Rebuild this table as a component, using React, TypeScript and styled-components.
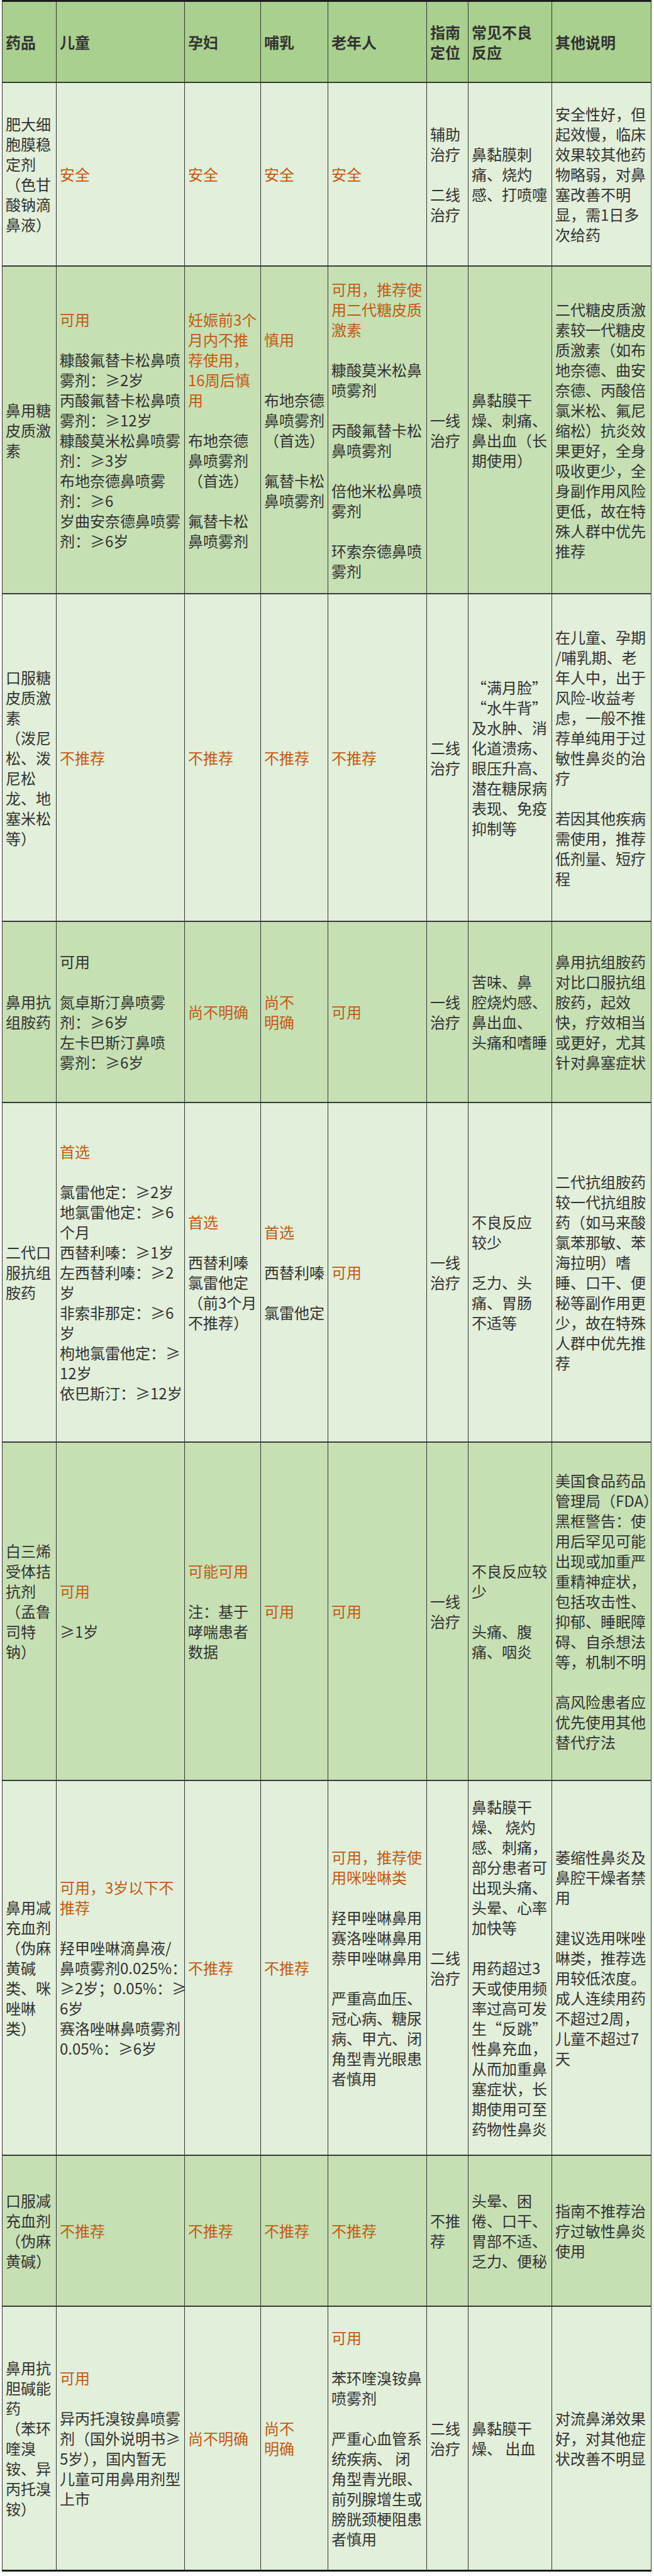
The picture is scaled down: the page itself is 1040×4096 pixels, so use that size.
import React from "react";
import styled, { createGlobalStyle } from "styled-components";

const GlobalStyle = createGlobalStyle`
  html, body { margin: 0; padding: 0; background: #ffffff; }
  body { font-family: "Noto Sans CJK SC", "Noto Sans", sans-serif; }
`;

const COLS = "86px 204px 121px 107px 157px 66px 133px 158px";

type Tone = "head" | "light" | "mid";

const BG: Record<Tone, string> = {
  head: "#a9d08e",
  light: "#e2efda",
  mid: "#c6e0b4",
};

const Page = styled.div`
  box-sizing: border-box;
  width: 1040px;
  padding: 0 0 0 3px;
`;

const Table = styled.div`
  display: flex;
  flex-direction: column;
  width: max-content;
  border-top: 3px solid #1c1c1c;
  border-bottom: 3px solid #1c1c1c;
  border-left: 1px solid #333333;
`;

const Row = styled.div<{ $h: number; $tone: Tone; $last?: boolean }>`
  display: grid;
  grid-template-columns: ${COLS};
  box-sizing: border-box;
  height: ${(p) => p.$h}px;
  background: ${(p) => BG[p.$tone]};
  border-bottom: ${(p) => (p.$last ? "none" : "2px solid #3a3a3a")};
`;

const Cell = styled.div`
  display: flex;
  flex-direction: column;
  justify-content: center;
  box-sizing: border-box;
  min-width: 0;
  padding-left: 5px;
  border-right: 1px solid #333333;
`;

const Line = styled.div<{ $accent?: boolean; $head?: boolean }>`
  height: 32px;
  line-height: 32px;
  font-size: 24px;
  white-space: nowrap;
  color: ${(p) => (p.$accent ? "#c55a11" : "#333333")};
  font-weight: ${(p) => (p.$head ? 700 : 400)};
`;

interface RowData {
  h: number;
  tone: Tone;
  cells: string[];
}

const header: RowData = {
  h: 129,
  tone: "head",
  cells: ["药品", "儿童", "孕妇", "哺乳", "老年人", "指南|定位", "常见不良|反应", "其他说明"],
};

const rows: RowData[] = [
  {
    h: 292,
    tone: "light",
    cells: [
      "肥大细|胞膜稳|定剂|（色甘|酸钠滴|鼻液）",
      "^安全",
      "^安全",
      "^安全",
      "^安全",
      "辅助|治疗||二线|治疗",
      "鼻黏膜刺|痛、烧灼|感、打喷嚏",
      "安全性好，但|起效慢，临床|效果较其他药|物略弱，对鼻|塞改善不明|显，需1日多|次给药",
    ],
  },
  {
    h: 521,
    tone: "mid",
    cells: [
      "鼻用糖|皮质激|素",
      "^可用||糠酸氟替卡松鼻喷|雾剂：≥2岁|丙酸氟替卡松鼻喷|雾剂：≥12岁|糠酸莫米松鼻喷雾|剂：≥3岁|布地奈德鼻喷雾|剂：≥6|岁曲安奈德鼻喷雾|剂：≥6岁",
      "^妊娠前3个|^月内不推|^荐使用，|^16周后慎|^用||布地奈德|鼻喷雾剂|（首选）||氟替卡松|鼻喷雾剂",
      "^慎用|||布地奈德|鼻喷雾剂|（首选）||氟替卡松|鼻喷雾剂|",
      "^可用，推荐使|^用二代糖皮质|^激素||糠酸莫米松鼻|喷雾剂||丙酸氟替卡松|鼻喷雾剂||倍他米松鼻喷|雾剂||环索奈德鼻喷|雾剂",
      "一线|治疗",
      "鼻黏膜干|燥、刺痛、|鼻出血（长|期使用）",
      "二代糖皮质激|素较一代糖皮|质激素（如布|地奈德、曲安|奈德、丙酸倍|氯米松、氟尼|缩松）抗炎效|果更好，全身|吸收更少，全|身副作用风险|更低，故在特|殊人群中优先|推荐",
    ],
  },
  {
    h: 521,
    tone: "light",
    cells: [
      "口服糖|皮质激|素|（泼尼|松、泼|尼松|龙、地|塞米松|等）",
      "^不推荐",
      "^不推荐",
      "^不推荐",
      "^不推荐",
      "二线|治疗",
      "“满月脸”|“水牛背”|及水肿、消|化道溃疡、|眼压升高、|潜在糖尿病|表现、免疫|抑制等",
      "在儿童、孕期|/哺乳期、老|年人中，出于|风险-收益考|虑，一般不推|荐单纯用于过|敏性鼻炎的治|疗||若因其他疾病|需使用，推荐|低剂量、短疗|程",
    ],
  },
  {
    h: 288,
    tone: "mid",
    cells: [
      "鼻用抗|组胺药",
      "可用||氮卓斯汀鼻喷雾|剂：≥6岁|左卡巴斯汀鼻喷|雾剂：≥6岁",
      "^尚不明确",
      "^尚不|^明确",
      "^可用",
      "一线|治疗",
      "苦味、鼻|腔烧灼感、|鼻出血、|头痛和嗜睡",
      "鼻用抗组胺药|对比口服抗组|胺药，起效|快，疗效相当|或更好，尤其|针对鼻塞症状",
    ],
  },
  {
    h: 540,
    tone: "light",
    cells: [
      "二代口|服抗组|胺药",
      "^首选||氯雷他定：≥2岁|地氯雷他定：≥6|个月|西替利嗪：≥1岁|左西替利嗪：≥2|岁|非索非那定：≥6|岁|枸地氯雷他定：≥|12岁|依巴斯汀：≥12岁",
      "^首选||西替利嗪|氯雷他定|（前3个月|不推荐）",
      "^首选||西替利嗪||氯雷他定",
      "^可用",
      "一线|治疗",
      "不良反应|较少||乏力、头|痛、胃肠|不适等",
      "二代抗组胺药|较一代抗组胺|药（如马来酸|氯苯那敏、苯|海拉明）嗜|睡、口干、便|秘等副作用更|少，故在特殊|人群中优先推|荐",
    ],
  },
  {
    h: 538,
    tone: "mid",
    cells: [
      "白三烯|受体拮|抗剂|（孟鲁|司特|钠）|",
      "^可用||≥1岁",
      "^可能可用||注：基于|哮喘患者|数据",
      "^可用",
      "^可用",
      "一线|治疗",
      "不良反应较|少||头痛、腹|痛、咽炎",
      "美国食品药品|管理局（FDA）|黑框警告：使|用后罕见可能|出现或加重严|重精神症状，|包括攻击性、|抑郁、睡眠障|碍、自杀想法|等，机制不明||高风险患者应|优先使用其他|替代疗法",
    ],
  },
  {
    h: 596,
    tone: "light",
    cells: [
      "鼻用减|充血剂|（伪麻|黄碱|类、咪|唑啉|类）",
      "^可用，3岁以下不|^推荐||羟甲唑啉滴鼻液/|鼻喷雾剂0.025%：|≥2岁；0.05%：≥|6岁|赛洛唑啉鼻喷雾剂|0.05%：≥6岁",
      "^不推荐",
      "^不推荐",
      "^可用，推荐使|^用咪唑啉类||羟甲唑啉鼻用|赛洛唑啉鼻用|萘甲唑啉鼻用||严重高血压、|冠心病、糖尿|病、甲亢、闭|角型青光眼患|者慎用",
      "二线|治疗",
      "鼻黏膜干|燥、 烧灼|感、刺痛，|部分患者可|出现头痛、|头晕、心率|加快等||用药超过3|天或使用频|率过高可发|生“反跳”|性鼻充血，|从而加重鼻|塞症状，长|期使用可至|药物性鼻炎",
      "萎缩性鼻炎及|鼻腔干燥者禁|用||建议选用咪唑|啉类，推荐选|用较低浓度。|成人连续用药|不超过2周，|儿童不超过7|天|",
    ],
  },
  {
    h: 240,
    tone: "mid",
    cells: [
      "口服减|充血剂|（伪麻|黄碱）",
      "^不推荐",
      "^不推荐",
      "^不推荐",
      "^不推荐",
      "不推|荐",
      "头晕、困|倦、口干、|胃部不适、|乏力、便秘",
      "指南不推荐治|疗过敏性鼻炎|使用",
    ],
  },
  {
    h: 418,
    tone: "light",
    cells: [
      "鼻用抗|胆碱能|药|（苯环|喹溴|铵、异|丙托溴|铵）",
      "^可用||异丙托溴铵鼻喷雾|剂（国外说明书≥|5岁），国内暂无|儿童可用鼻用剂型|上市",
      "^尚不明确",
      "^尚不|^明确",
      "^可用||苯环喹溴铵鼻|喷雾剂||严重心血管系|统疾病、 闭|角型青光眼、|前列腺增生或|膀胱颈梗阻患|者慎用",
      "二线|治疗",
      "鼻黏膜干|燥、 出血",
      "对流鼻涕效果|好，对其他症|状改善不明显",
    ],
  },
];

function CellLines({ text, head }: { text: string; head?: boolean }) {
  const lines = text.split("|");
  return (
    <Cell>
      {lines.map((raw, i) => {
        const accent = raw.startsWith("^");
        const content = accent ? raw.slice(1) : raw;
        return (
          <Line key={i} $accent={accent} $head={head}>
            {content === "" ? "\u00a0" : content}
          </Line>
        );
      })}
    </Cell>
  );
}

export default function App() {
  return (
    <>
      <GlobalStyle />
      <Page lang="zh-CN">
        <Table>
          <Row $h={header.h} $tone={header.tone}>
            {header.cells.map((c, i) => (
              <CellLines key={i} text={c} head />
            ))}
          </Row>
          {rows.map((r, ri) => (
            <Row key={ri} $h={r.h} $tone={r.tone} $last={ri === rows.length - 1}>
              {r.cells.map((c, ci) => (
                <CellLines key={ci} text={c} />
              ))}
            </Row>
          ))}
        </Table>
      </Page>
    </>
  );
}
